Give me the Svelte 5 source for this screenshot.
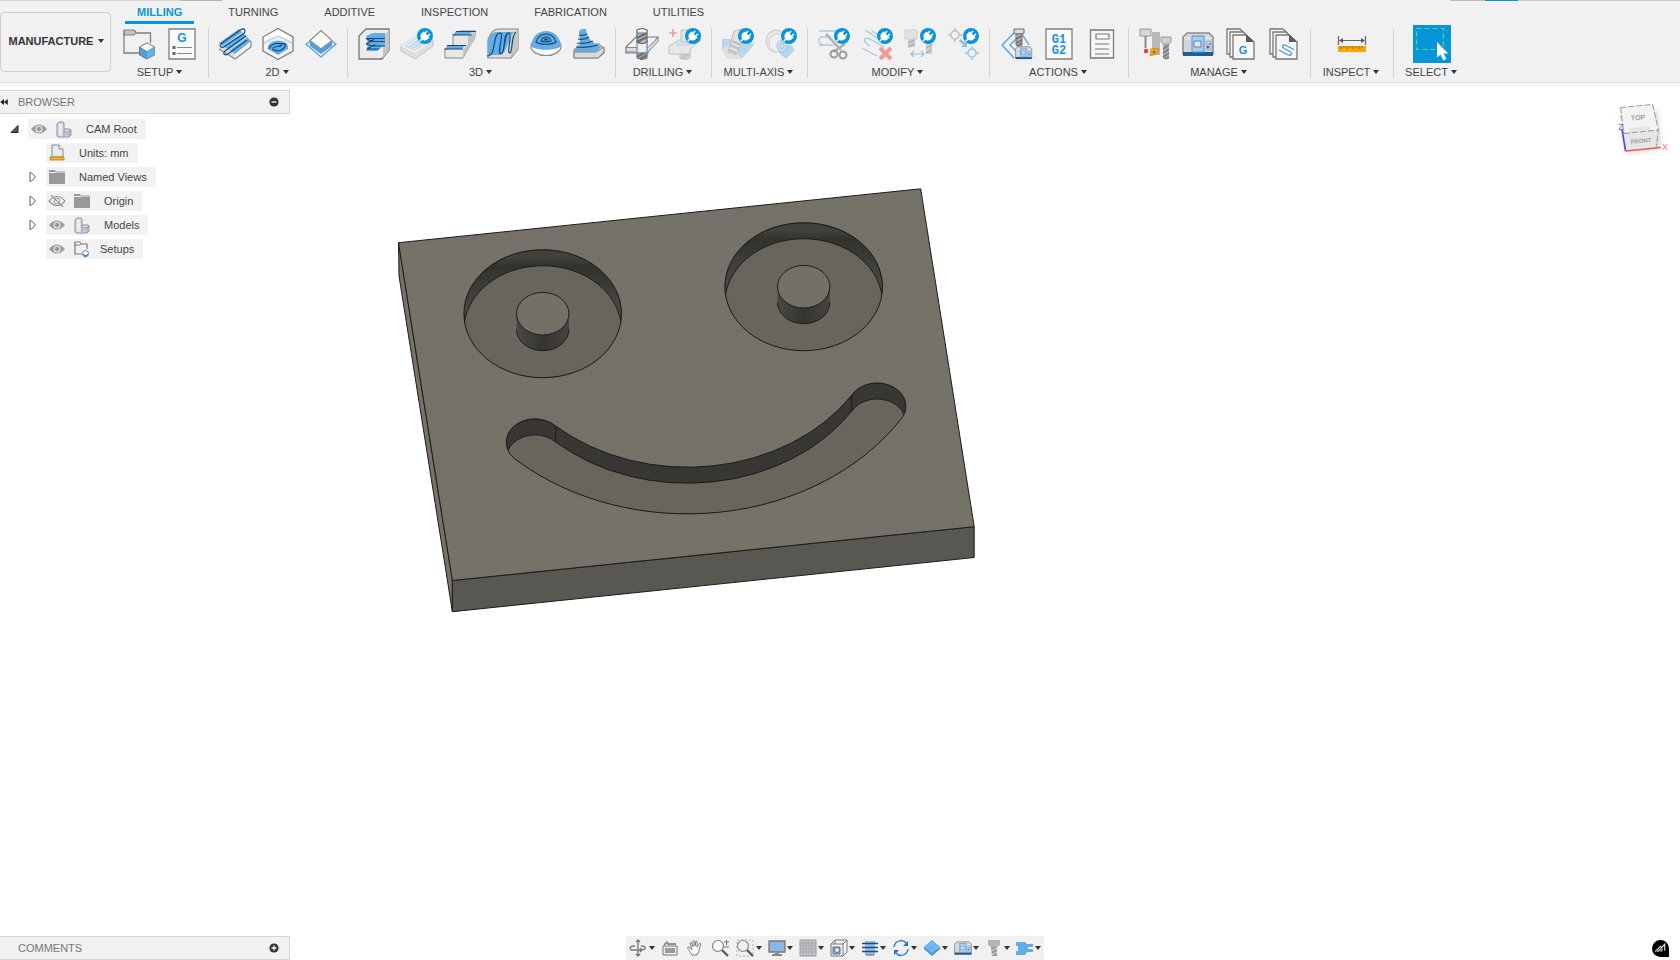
<script>
    let activeTab = "MILLING";
    let tabs = ["MILLING", "TURNING", "ADDITIVE", "INSPECTION", "FABRICATION", "UTILITIES"];

    // small "extension" badge that sits on the locked tools
    const plug = `<circle cx="24" cy="8" r="8" fill="#0696d7"/>
        <g transform="translate(24 8) rotate(45)" fill="#fff" stroke="#fff">
            <path d="M-3.500 -1.500h7v2a3.500 3.500 0 0 1-7 0z" stroke-width="1.500"/>
            <path d="M-2-5v3M2-5v3M0 4v3.500" stroke-width="1.600"/>
        </g>`;

    const machine = `<path d="M1 9l4-4h22l4 4v17H1z" fill="#d3d6da" stroke="#8a8a8a" stroke-width="1.5"/>
        <path d="M2 10h28" stroke="#eee"/><path d="M1 24h30v4H1z" fill="#1c5d92"/>
        <path d="M10 8h12v16H10z" fill="#a5cdf0" stroke="#5b93c9"/>
        <path d="M12 13h7v6h-7z" fill="#d9e6f2" stroke="#5b84ad"/>
        <path d="M24 13h5v9h-5z" fill="#a6cff2" stroke="#7aa8d4" stroke-width=".6"/>
        <circle cx="26" cy="19" r="1.2" fill="#d2204c"/><circle cx="28" cy="16" r=".8" fill="#1466b0"/>`;

    const pages = `<g fill="#f7f7f7" stroke="#777" stroke-width="1.300"><path d="M2 1h13l4 4v21H2z"/><path d="M5 4h13l4 4v21H5z"/><path d="M8 7h13l8 7v17H8z"/></g>
        <path d="M21 6l8 8h-8z" fill="#5a5a5a"/>`;

    const icons = {
        setup: `<path d="M1 3v22h17M13 5h14.500v10" fill="none" stroke="#7f7f7f" stroke-width="1.300"/>
            <path d="M1 2h10l2 2-2 3H1z" fill="#c4c4c4" stroke="#7f7f7f" stroke-width="1.200"/>
            <path d="M16.500 19l7.500-4 7.500 4v8L24 31l-7.500-4z" fill="#4b9fdc" stroke="#666" stroke-width=".8"/>
            <path d="M16.500 19l7.500-4 7.500 4-7.500 4.500z" fill="#fff" stroke="#777" stroke-width=".8"/>
            <path d="M24 23.500l7.500-4.500v8L24 31z" fill="#64b0e8"/>`,
        gdoc: `<path d="M3 1h26v30H3z" fill="#fafafa" stroke="#7f7f7f" stroke-width="1.300"/>
            <text x="16" y="14" text-anchor="middle" font-family="Liberation Sans, sans-serif" font-size="12" font-weight="bold" fill="#1c8fe3">G</text>
            <path d="M11 19.500h15M11 25.500h15" stroke="#888" stroke-width="1.200"/>
            <path d="M6.500 18h3v3h-3zM6.500 24h3v3h-3z" fill="#666"/>`,
        adaptive: `<path d="M0 16L20 2l12 11v6L16 31 0 21z" fill="#dcdcdc"/>
            <path d="M0 15L20 1l12 12-16 13z" fill="#63ace5"/>
            <path d="M5 18L23 5M10 22L28 9" stroke="#a9d2f3" stroke-width="2"/>
            <path d="M16 26v4.500l15.500-12v-5z" fill="#f2f2f2"/><path d="M0 21l16 10 16-12v-6" fill="none" stroke="#8a8a8a" stroke-width="1.200"/>
            <path d="M3 15L22 1.500c4-2 5 2 3 4L6 18c-3 3-7 0-3-3zM6 23c-3 3 0 5 3 3L28 12M6 23L27 8" fill="none" stroke="#0f4a78" stroke-width="1.100"/>`,
        pocket: `<path d="M1 9l15-8.500L31 9v14l-15 8.500L1 23z" fill="#fff"/>
            <path d="M1 14l15-7 15 7v9l-15 8.500L1 23z" fill="#d6d6d6"/>
            <path d="M1 17l15-8 15 8v6l-15 8.500L1 23z" fill="#f3f3f3"/>
            <path d="M6 18c3-7 17-7 20 0v3l-10 6-10-6z" fill="#63ace5"/>
            <path d="M1 9l15-8.500L31 9v14l-15 8.500L1 23z" fill="none" stroke="#808080" stroke-width="1.300"/>
            <path d="M7 21c3-7 9-6 17-5-2 6-7 9-14 5M11 20c3-3 6 0 9-3" fill="none" stroke="#0f4a78" stroke-width="1.100"/>`,
        contour2d: `<path d="M7 12l-6 4 15 13 15-13-6-4" fill="none" stroke="#4a9fe0" stroke-width="1.200"/>
            <path d="M5 13v5l11 8 11-8v-5l-11 8z" fill="#4d9fde"/>
            <path d="M5 12.500l11-10 11 10L16 21z" fill="#fcfcfc" stroke="#8a8a8a" stroke-width="1.100"/>`,
        rough: `<path d="M1 8l7-7h23v21l-7 9H1z" fill="#ececec" stroke="#777" stroke-width="1.300"/>
            <path d="M25 9l6-7v20l-6 8z" fill="#c4c4c4"/>
            <path d="M8 8c3-1 5-3 8-3h11v12c-4 1-5 5-8 6H8c2-5 2-9 0-15z" fill="#63ace5"/>
            <path d="M27 10.500H8l6 3h13M8 16l8-4.500M8 16l6 2h13M9 21l8-4.500M9 21h12" fill="none" stroke="#0f4a78" stroke-width="1.100"/>`,
        flat: `<g opacity=".45"><path d="M0 18L22 4l10 8v6L14 31 0 23z" fill="#c9c9c9" stroke="#888"/>
            <path d="M0 18L22 4l10 8-18 13z" fill="#eef4fa"/>
            <path d="M4 18L20 7l8 6-14 9z M8 18l12-8 4 3-10 7z M12 17l7-4 2 1-7 4z" fill="none" stroke="#63a5dc"/></g>${plug}`,
        steps: `<path d="M1 22l8-5V9l7-6h15v6L19 30H1z" fill="#e8e8e8" stroke="#8a8a8a"/>
            <path d="M19 22l12-15v4L19 30zM24 9l7-6v9l-7 7z" fill="#c2c2c2"/>
            <path d="M12 3h17l-4 4H9zM4 17h17l-3 4H1z" fill="#63ace5"/>
            <path d="M12 3.500h20M8 7h20M3 17.500h19M0 21h19" stroke="#0f4a78" stroke-width="1.200"/>`,
        parallel: `<path d="M1 12C3 6 6 1 11 1h20v20l-7 9H1z" fill="#dedede" stroke="#888" stroke-width="1.200"/>
            <path d="M24 9l7-7v19l-7 8z" fill="#c7c7c7"/>
            <path d="M1 27V12C4 6 6 4 10 4h18c-6 3-5 9-8 14-2 6-4 8-8 9z" fill="#63ace5"/>
            <path d="M0 28c10 0 5-23 13-23 5 0-4 20 1 21 5 0 1-21 8-21M14 26c4 0 3-22 8-21 4 1-3 20 1 20 3-2 1-18 6-21" fill="none" stroke="#0f4a78" stroke-width="1.200"/>`,
        scallop: `<ellipse cx="16" cy="18.500" rx="15" ry="9" fill="#fff" stroke="#888" stroke-width="1.200"/>
            <path d="M1 18C2 8 9 3 16 3s14 5 15 15c-4 5-26 5-30 0z" fill="#63ace5"/>
            <path d="M6 14c2-6 6-8 10-8s8 2 10 8c-4 3-16 3-20 0zM11 13c1-3 3-4 5-4s4 1 5 4c-3 1-7 1-10 0zM14.500 12l1.500-1.500 1.500 1.500z" fill="none" stroke="#0f4a78" stroke-width="1.100"/>`,
        spiral: `<path d="M1 22l7-6h18l5 5v4l-6 5H1z" fill="#dedede" stroke="#888" stroke-width="1.200"/>
            <path d="M6 3l3-2h4c1 9 6 14 15 18l-5 5H1l6-8z" fill="#63ace5"/>
            <path d="M6 7c4 1 6 0 8-1M5 11c5 1 8 0 11-2M4 15c7 1 12 0 16-2M3 19c9 1 16 0 22-2" fill="none" stroke="#0f4a78" stroke-width="1.200"/>
            <path d="M1 24h22l8-5v5l-6 6H1z" fill="#d8d8d8" stroke="#888"/>`,
        drill: `<path d="M11 17h10v13q-5 3-10 0z" fill="#a5a5a5" stroke="#666"/>
            <path d="M11 29l9-5M14 31l7-4" stroke="#6b6b6b" stroke-width="2"/>
            <path d="M0 19L10 9h22L22 22v3H0z" fill="#f1f1f1" stroke="#7a7a7a" stroke-width="1.200"/>
            <path d="M0 19.500h22l10-10v4L22 24H0z" fill="#dcdcdc" stroke="#858585"/>
            <path d="M11 12h10v12H11z" fill="#eee"/><path d="M11 12v12M21 12v12" stroke="#3f9ae0" stroke-width="1.200"/>
            <path d="M11 2q5-3 10 0v12q-5 3-10 0z" fill="#b9b9b9" stroke="#666" stroke-width="1.200"/>
            <path d="M11 10l10-5M11 14l10-5" stroke="#6b6b6b" stroke-width="2"/>
            <path d="M11 2q5-3 10 0v3H11z" fill="#eee" stroke="#777"/>`,
        drill2: `<g opacity=".4"><path d="M11 17h10v13q-5 3-10 0z" fill="#a5a5a5" stroke="#777"/>
            <path d="M11 26l9-4M12 31l8-5" stroke="#777" stroke-width="2"/>
            <path d="M0 18L10 12h22L21 21v5H0z" fill="#dcdcdc" stroke="#777"/>
            <path d="M7 15h18l-5 3H7z" fill="#8cc4f2"/><path d="M12 2h9v12h-9z" fill="#ccc" stroke="#777"/></g>
            <path d="M0 5h8M4 1v8" stroke="#f09aa0" stroke-width="1.600"/>${plug}`,
        swarf: `<g opacity=".4"><path d="M0 11h11l4 6-9 13-6-9z" fill="#63ace5"/><path d="M0 21l12-9 20 3-12 15H6z" fill="#ccc" stroke="#aaa"/>
            <path d="M14 24l8-10 10 3-12 13z" fill="#63ace5"/>
            <path d="M12 3l8-2 3 6-9 20-8-3z" fill="#ccc" stroke="#777"/><path d="M8 17l9 4M10 13l9 4M7 22l7 3" stroke="#777" stroke-width="2"/></g>${plug}`,
        flow: `<g opacity=".4"><ellipse cx="11" cy="13" rx="10" ry="11" fill="#ddd" stroke="#888"/>
            <ellipse cx="13" cy="15" rx="9" ry="9" fill="#eee" stroke="#999"/><path d="M13 24l12-8 5 6-9 9z" fill="#63ace5"/>
            <ellipse cx="17" cy="18" rx="5" ry="6" fill="#9bc8ee" stroke="#357fc0"/><ellipse cx="17" cy="18" rx="2" ry="3" fill="none" stroke="#357fc0"/></g>${plug}`,
        trim: `<path d="M1 3h19M1 17h10M5 9h8M5 9c-6 0-6 8 3 8h12" fill="none" stroke="#a9cbe8" stroke-width="1.300"/>
            <path d="M8 6l15 16M27 16L15 24" stroke="#b0b0b0" stroke-width="2.500"/>
            <circle cx="16" cy="26" r="3.500" fill="none" stroke="#9a9a9a" stroke-width="2"/><circle cx="25" cy="27" r="3.500" fill="none" stroke="#9a9a9a" stroke-width="2"/>${plug}`,
        remove: `<path d="M1 20l15 8M4 2l12 8M9 18L5 15c-4-4 1-6 4-4l14 8M11 3l8 5" fill="none" stroke="#a5c9e8" stroke-width="1.400"/>
            <path d="M19 20l11 11M30 20L19 31" stroke="#ee9b9b" stroke-width="4"/>${plug}`,
        replace: `<g opacity=".4"><path d="M1 2h12v9H1z" fill="#ccc" stroke="#999"/><path d="M4 11h7v8H4z" fill="#999"/>
            <path d="M22 14h6v12h-6z" fill="#999"/><path d="M4 15l7-3M4 19l7-3M22 20l6-3M22 25l6-3" stroke="#555" stroke-width="1.500"/></g>
            <path d="M7 26h13M10 23l-3 3 3 3M17 23l3 3-3 3" fill="none" stroke="#8fc1ea" stroke-width="1.200"/>${plug}`,
        move: `<g fill="none" stroke="#c6c6c6" stroke-width="1.800"><circle cx="8" cy="7" r="4"/><path d="M8 0v3M8 11v3M1 7h3M12 7h3"/></g>
            <g fill="none" stroke="#a5cdeb" stroke-width="1.800"><circle cx="25" cy="25" r="4"/><path d="M25 18v3M25 29v3M18 25h3M29 25h3"/></g>
            <path d="M13 12l4 4" stroke="#8fc1ea" stroke-width="3"/><path d="M20 13v6h-6z" fill="#8fc1ea"/>${plug}`,
        simulate: `<path d="M14 5L2 17l12 13M18 9l-8 8 8 8M22 6l7 11" fill="none" stroke="#3f9ae6" stroke-width="1.200"/>
            <path d="M14 1h10v4l-2 1h-6l-2-1z" fill="#ddd" stroke="#666"/><path d="M16 6h6v11l-3 2-3-2z" fill="#aaa" stroke="#777"/>
            <path d="M16 11l6-3M16 15l6-3M17 18l5-3" stroke="#666" stroke-width="1.300"/>
            <g transform="translate(15 16) scale(.54)">${machine}</g>`,
        post: `<path d="M3 1h26v30H3z" fill="#fafafa" stroke="#7f7f7f" stroke-width="1.300"/>
            <g font-family="Liberation Mono, monospace" font-size="12" font-weight="bold" fill="#1c8fe3" text-anchor="middle"><text x="16" y="15">G1</text><text x="16" y="26">G2</text></g>`,
        sheet: `<path d="M4.500 2h23v28h-23z" fill="#f7f7f7" stroke="#7a7a7a" stroke-width="1.300"/>
            <path d="M10 6h13v5H10z" fill="none" stroke="#777" stroke-width="1.200"/><path d="M9 16h14M9 21h14M9 26h14" stroke="#777" stroke-width="1.100"/>`,
        tools: `<path d="M13 4h8v23h-8z" fill="#b9b9b9"/><path d="M1 1h11v7H1z" fill="#d8d8d8" stroke="#999"/><path d="M6.500 8v12" stroke="#888" stroke-width="2"/>
            <circle cx="7" cy="23" r="2.200" fill="#f13b3b"/><path d="M12 21l8-1-2 6-7 2z" fill="#f5a31b" stroke="#c57c08" stroke-width=".6"/><circle cx="15" cy="24" r="1" fill="#444"/>
            <path d="M22 9h10v5l-2 2h-6l-2-2z" fill="#cfcfcf" stroke="#999"/><path d="M24 16h6v15h-6z" fill="#aaa"/>
            <path d="M24 21l6-4M24 25l6-4M24 29l6-4M26 31l4-2" stroke="#777" stroke-width="1.500"/>`,
        machine,
        templates: `${pages}<text x="18" y="26" text-anchor="middle" font-family="Liberation Sans, sans-serif" font-size="11" font-weight="bold" fill="#1c8fe3">G</text>`,
        toolpaths: `${pages}<path d="M11 22l8 4.500c4 2 6-1 3-3l-6-3c-3-2-1-5 2-3l8 4" fill="none" stroke="#3f9ae6" stroke-width="1.300"/>`,
        measure: `<path d="M2 18h28v6H2z" fill="#f9a602"/><path d="M5 18v3M8 18v2M11 18v3M14 18v2M17 18v3M20 18v2M23 18v3M26 18v2" stroke="#9a6800"/>
            <path d="M2.500 8v9M29.500 8v9M4 12.500h24" stroke="#666" stroke-width="1.200"/><path d="M3 12.500l4-2.500v5zM29 12.500l-4-2.500v5z" fill="#555"/>`,
        select: `<path d="M0.500 0.500h27v21h-27z" fill="none" stroke="#5fd08a" stroke-width="1.200" stroke-dasharray="5 3"/>
            <path d="M21 14v15.500l3.500-3 2.800 6 3-1.500-2.600-5.500h4.500z" fill="#fff"/>`,
        eye: `<path d="M1 9q8-9 16 0-8 9-16 0z" fill="#999"/><circle cx="9" cy="9" r="3.500" fill="#f1f1f1"/><circle cx="9" cy="9" r="2.400" fill="#999"/>`,
        eyeOff: `<path d="M1 9q8-9 16 0-8 9-16 0z" fill="none" stroke="#999" stroke-width="1.200"/><circle cx="9" cy="9" r="3" fill="none" stroke="#999"/><path d="M3 3l12 12" stroke="#999" stroke-width="1.300"/>`,
        part: `<path d="M2 4l2-2h4l1 1v6h6l1 1v5l-2 2H3l-1-1z" fill="#d6dae4" stroke="#8b909b"/><path d="M4 4h3v11H4z" fill="#e9ecf2"/><path d="M9 9v7M9 12h5l2-2M14 12v4" fill="none" stroke="#8b909b"/><path d="M9.500 12.500h4v3h-4z" fill="#bcc3d3"/>`,
        ruler: `<path d="M4 1h7l4 4v8H4z" fill="#e6eaf3" stroke="#888"/><path d="M11 1v4h4" fill="#fff" stroke="#888"/><path d="M2 13h14v3H2z" fill="#f0b128" stroke="#b77d10" stroke-width=".8"/>`,
        folder: `<path d="M1 2h6l1 2H1zM1 5h16v11H1z" fill="#999"/><path d="M8 4h9" stroke="#999"/>`,
        setups: `<path d="M2 3v11h7M7 4h7v5" fill="none" stroke="#777" stroke-width="1.200"/><path d="M2 2h5l1 1.500L7 5H2z" fill="#fff" stroke="#777"/>
            <circle cx="12.500" cy="13.500" r="3" fill="#fff" stroke="#777"/><path d="M9.500 13.500l3 1.500 3-1.500-1 3-2 1-2-1z" fill="#3b97dc"/>`,
        orbit: `<path d="M9 1v16M7 3l2-2 2 2M7 15l2 2 2-2" fill="none" stroke="#777" stroke-width="1.400"/><path d="M6 7C1 7 0 9 2 11h11M12 7c5 0 6 3 1 4M11 9l2 2-2 2" fill="none" stroke="#777" stroke-width="1.300"/>`,
        look: `<path d="M2 7h14v9H2z" fill="#eee" stroke="#777"/><path d="M4 9h10v5H4z" fill="#9a9a9a"/><path d="M3 6l3-3 1 2h8" fill="none" stroke="#777" stroke-width="1.300"/>`,
        pan: `<path d="M6 16C4 12 1 10 2 8c2 0 3 2 4 3L4 4c1-1 2 0 3 4l0-6c1-1 2 0 2 5l1-5c2 0 1 2 1 6l3-4c2 1-1 4-1 8l-2 4z" fill="#fff" stroke="#777"/>`,
        zoom: `<circle cx="7" cy="7" r="5.500" fill="#f5fafc" stroke="#888" stroke-width="1.200"/><path d="M11 11l6 6" stroke="#555" stroke-width="2.200"/><path d="M13 3h5M15.500 1v5M13 8h5" stroke="#777"/>`,
        zoomWin: `<path d="M1 1h16v16H1z" fill="none" stroke="#aaa" stroke-dasharray="2 2"/><circle cx="7" cy="7" r="5.500" fill="#e5f2f0" stroke="#888" stroke-width="1.200"/><path d="M11 11l6 6" stroke="#555" stroke-width="2.200"/>`,
        display: `<path d="M1 2h16v11H1z" fill="#8ab7e6" stroke="#777" stroke-width="1.300"/><path d="M7 14h4v1h3v2H4v-2h3z" fill="#888"/>`,
        grid: `<path d="M1 1h16v16H1z" fill="#c4c8cd" stroke="#999"/><path d="M1 4h16M1 7h16M1 10h16M1 13h16M4 1v16M7 1v16M10 1v16M13 1v16" stroke="#989ca2" stroke-width=".7"/>`,
        views: `<path d="M1 5l4-4h12v12l-4 4H1z" fill="#f3f3f3" stroke="#777"/><path d="M1 5h12v12M13 5l4-4M5 1v4" fill="none" stroke="#777"/><path d="M3 8h7v7H3z" fill="#8fc3ef" stroke="#568"/><circle cx="7" cy="11" r="2.500" fill="#e8f3fb" stroke="#667"/>`,
        stack: `<path d="M4 2h10v14H4z" fill="#8fc0ea"/><path d="M1 4.500h16M1 8.500h16M1 12.500h16" stroke="#1d4a78" stroke-width="1.400"/><path d="M5 16h8" stroke="#667"/>`,
        cycle: `<path d="M2 8C3 1 11 0 14 4M16 10c-1 7-9 8-12 4" fill="none" stroke="#2f7fd0" stroke-width="1.500"/><path d="M16 2v5h-5zM2 16v-5h5z" fill="#2f6fb5"/>`,
        stock: `<path d="M1 8l8-7 8 7v2l-8 7-8-7z" fill="#4596d4"/><path d="M1 8l8-7 8 7-8 6z" fill="#76b9ed"/><path d="M5 5l8 6M3 7l8 6M13 5l-8 6" stroke="#5a9fd4" stroke-width=".6"/>`,
        bit: `<path d="M3 1h12v5l-3 2H6L3 6z" fill="#b3b3b3"/><path d="M6 8h6v9H7z" fill="#999"/><path d="M6 12l6-3M6 16l6-3" stroke="#ddd"/>`,
        fixture: `<path d="M0 3h9l2 2h6v3h-5v2h5v3h-6l-2 3H0v-4h2V7H0z" fill="#63ace5"/>`,
    };

    let groups = [
        { label: "SETUP", tools: ["setup", "gdoc"] },
        { label: "2D", tools: ["adaptive", "pocket", "contour2d"] },
        { label: "3D", tools: ["rough", "flat", "steps", "parallel", "scallop", "spiral"] },
        { label: "DRILLING", tools: ["drill", "drill2"] },
        { label: "MULTI-AXIS", tools: ["swarf", "flow"] },
        { label: "MODIFY", tools: ["trim", "remove", "replace", "move"] },
        { label: "ACTIONS", tools: ["simulate", "post", "sheet"] },
        { label: "MANAGE", tools: ["tools", "machine", "templates", "toolpaths"] },
        { label: "INSPECT", tools: ["measure"] },
        { label: "SELECT", tools: ["select"] },
    ];

    let tree = [
        { label: "CAM Root", icons: ["eye", "part"], root: true, toggle: "open" },
        { label: "Units: mm", icons: ["ruler"] },
        { label: "Named Views", icons: ["folder"], toggle: "closed" },
        { label: "Origin", icons: ["eyeOff", "folder"], toggle: "closed" },
        { label: "Models", icons: ["eye", "part"], toggle: "closed" },
        { label: "Setups", icons: ["eye", "setups"], near: true },
    ];

    let nav = [
        { name: "orbit", menu: true, wide: true },
        { name: "look" },
        { name: "pan" },
        { name: "zoom" },
        { name: "zoomWin", menu: true, wide: true },
        { name: "display", menu: true },
        { name: "grid", menu: true },
        { name: "views", menu: true },
        { name: "stack", menu: true },
        { name: "cycle", menu: true },
        { name: "stock", menu: true },
        { name: "machine", menu: true, box: "0 0 32 32" },
        { name: "bit", menu: true },
        { name: "fixture", menu: true },
    ];

    let eyes = [
        { x: 542.7, y: 313.7 },
        { x: 803.7, y: 286.7 },
    ];

    const smile =
        "M555.7 426A196.500 159.600 0 0 0 851.8 395.1A28.800 23.400 0 1 1 899.8 420.7A254 206.300 0 0 1 517.1 460.6A28.800 23.400 0 1 1 555.7 426Z";
</script>

<div class="app">
    <div class="strip"><i class="doc"></i><i class="dark"></i><i class="rest"></i><i class="doc right"></i><i class="blue"></i><i class="end"></i></div>
    <header>
        <button class="workspace">MANUFACTURE <span class="caret"></span></button>
        <div class="ribbon">
            <nav class="tabs">
                {#each tabs as tab}
                    <button class:active={tab === activeTab} on:click={() => (activeTab = tab)}>{tab}</button>
                {/each}
            </nav>
            <div class="groups">
                {#each groups as group}
                    <section class="group">
                        <div class="tools">
                            {#each group.tools as tool}
                                <button class="tool" class:selected={tool === "select"} aria-label={tool}>
                                    <svg viewBox="0 0 32 32">{@html icons[tool]}</svg>
                                </button>
                            {/each}
                        </div>
                        <button class="group-label">{group.label}<span class="caret"></span></button>
                    </section>
                {/each}
            </div>
        </div>
    </header>

    <main>
        <svg class="scene" viewBox="0 86 1680 874">
            <defs>
                <linearGradient id="face" gradientUnits="userSpaceOnUse" x1="490" y1="503" x2="486" y2="532" spreadMethod="reflect">
                    <stop offset="0.1" stop-color="#757367" />
                    <stop offset="0.9" stop-color="#75706a" />
                </linearGradient>
                <linearGradient id="wall" x1="0" y1="0" x2="0" y2="1">
                    <stop offset="0" stop-color="#42413c" />
                    <stop offset="0.06" stop-color="#42413c" />
                    <stop offset="0.13" stop-color="#31312e" />
                    <stop offset="0.5" stop-color="#4b4a45" />
                    <stop offset="1" stop-color="#3a3935" />
                </linearGradient>
                <linearGradient id="post" x1="0" y1="0" x2="1" y2="0">
                    <stop offset="0" stop-color="#4a4944" />
                    <stop offset="0.5" stop-color="#353430" />
                    <stop offset="1" stop-color="#45443f" />
                </linearGradient>
                <radialGradient id="floor">
                    <stop offset="0" stop-color="#6c6760" />
                    <stop offset="1" stop-color="#67645c" />
                </radialGradient>
                <clipPath id="eye-clip"><ellipse rx="78.800" ry="64" /></clipPath>
                <clipPath id="smile-clip"><path d={smile} /></clipPath>
            </defs>
            <g stroke="#1c1c1a" stroke-width="1" stroke-linejoin="round">
                <path d="M398.5 242.700L452.400 580.500V611.700L399 276z" fill="#777169" />
                <path d="M452.400 580.500L974.200 526.700V557.500L452.400 611.700z" fill="#585751" />
                <path d="M398.500 242.700L920.700 188.800L974.200 526.700L452.400 580.500z" fill="url(#face)" />
                {#each eyes as eye}
                    <g transform="translate({eye.x} {eye.y})">
                        <g clip-path="url(#eye-clip)">
                            <ellipse rx="78.800" ry="64" fill="url(#wall)" />
                            <ellipse cy="16" rx="78.800" ry="64" fill="url(#floor)" />
                        </g>
                        <ellipse rx="78.800" ry="64" fill="none" />
                        <path d="M-26.200 0V15.700A26.200 21.300 0 0 0 26.200 15.700V0z" fill="url(#post)" stroke="none" />
                        <path d="M-26.200 15.700A26.200 21.300 0 0 0 26.200 15.700" fill="none" />
                        <ellipse rx="26.200" ry="21.300" fill="#737166" />
                    </g>
                {/each}
                <g clip-path="url(#smile-clip)">
                    <path d={smile} fill="#383733" />
                    <path d={smile} fill="#69655d" transform="translate(0 16)" />
                </g>
                <path d={smile} fill="none" />
                <path d="M555.700 426v16M851.800 395v16" />
            </g>
        </svg>

        <div class="upper">
            <aside>
                <div class="bar">
                    <svg class="collapse" viewBox="0 0 10 8"><path d="M5 0v8L0 4zM10 0v8L5 4z" fill="#222" /></svg>
                    <h2>BROWSER</h2>
                    <button class="round" aria-label="Hide browser">
                        <svg viewBox="0 0 10 10"><circle cx="5" cy="5" r="4.600" fill="#333" /><path d="M2.500 5h5" stroke="#fff" stroke-width="1.300" /></svg>
                    </button>
                </div>
                <ul class="tree">
                    {#each tree as node}
                        <li class:root={node.root}>
                            <button class="toggle" aria-label="Toggle {node.label}">
                                {#if node.toggle === "open"}
                                    <svg viewBox="0 0 10 10"><path d="M8 1.500v7H1z" fill="#555" stroke="#222" /></svg>
                                {:else if node.toggle === "closed"}
                                    <svg viewBox="0 0 10 10"><path d="M2 0.500h1l4.500 4.500-4.500 4.500H2z" fill="#fff" stroke="#555" /></svg>
                                {/if}
                            </button>
                            <div class="chip" class:near={node.near}>
                                {#each node.icons as name}
                                    <svg viewBox="0 0 18 18">{@html icons[name]}</svg>
                                {/each}
                                <span>{node.label}</span>
                            </div>
                        </li>
                    {/each}
                </ul>
            </aside>

            <svg class="cube" viewBox="0 0 62 62">
                <defs>
                    <filter id="soft" x="-30%" y="-30%" width="160%" height="160%"><feGaussianBlur stdDeviation="3" /></filter>
                </defs>
                <path d="M12 14l34-2 4 38-33 5z" fill="#999" opacity=".5" filter="url(#soft)" />
                <path d="M10.500 9.500L42.500 6.500 48.500 32 14 35.500z" fill="#f3f3f3" />
                <path d="M14 35.500L48.500 32 46 49.500 15.500 53z" fill="#e6e6e7" />
                <path d="M19 30l21-2v5l-20 2z" fill="#e3e4e6" />
                <path d="M10.500 9.500L42.500 6.500 48.500 32 46 49.500M14 35.500L48.500 32M10.500 9.500L14 35.500" fill="none" stroke="#999" stroke-dasharray="6 2" />
                <path d="M12 31l3.500 22" stroke="#4a4ae8" stroke-width="1.600" />
                <path d="M15.500 53L51 49.500" stroke="#ee5a5a" stroke-width="1.600" />
                <path d="M11 17v3" stroke="#6ed06e" />
                <g font-family="Liberation Sans, sans-serif" text-anchor="middle">
                    <text x="28" y="22" font-size="7" font-weight="bold" fill="#9a9da2" transform="rotate(-4 28 20)">TOP</text>
                    <text x="31" y="45" font-size="6" font-weight="bold" fill="#9a9da2" transform="rotate(-6 31 43)">FRONT</text>
                    <text x="11" y="32" font-size="9" fill="#6a6af0">Z</text>
                    <text x="55" y="52" font-size="9" fill="#f27b7b">X</text>
                </g>
            </svg>
        </div>

        <footer>
            <div class="bar comments">
                <h2>COMMENTS</h2>
                <button class="round" aria-label="Add comment">
                    <svg viewBox="0 0 10 10"><circle cx="5" cy="5" r="4.600" fill="#333" /><path d="M2.500 5h5M5 2.500v5" stroke="#fff" stroke-width="1.300" /></svg>
                </button>
            </div>
            <div class="nav">
                {#each nav as item}
                    <button class:wide={item.wide} class:plain={!item.menu} aria-label={item.name}>
                        <svg viewBox={item.box || "0 0 18 18"}>{@html icons[item.name]}</svg>
                        {#if item.menu}<span class="caret"></span>{/if}
                    </button>
                {/each}
            </div>
            <button class="badge" aria-label="Assistant">
                <svg viewBox="0 0 16 16"><path d="M3 11l5-5 1 1 3-3v6M5 11l5-4M8 11l2-2" fill="none" stroke="#ddd" stroke-width="1.100" /></svg>
            </button>
        </footer>
    </main>
</div>

<style>
    :global(body) {
        margin: 0;
        background: #fff;
    }

    .app {
        min-height: 100vh;
        display: flex;
        flex-direction: column;
        font-family: "Liberation Sans", Arial, sans-serif;
        font-size: 11px;
        line-height: 14px;
        color: #444;
    }

    button {
        font: inherit;
        color: inherit;
        background: none;
        border: none;
        padding: 0;
        cursor: pointer;
    }

    svg {
        display: block;
        flex: none;
    }

    .caret {
        display: inline-block;
        border: 3px solid transparent;
        border-top: 4px solid #333;
        border-bottom: 0;
    }

    .strip {
        display: flex;
        height: 1px;
        background: #f1f1f1;
    }

    .doc {
        width: 180px;
        background: #d5d5d5;
    }

    .dark {
        width: 42px;
        background: #b5b5b5;
    }

    .rest {
        flex: 1;
    }

    .doc.right {
        width: 35px;
        background: #bbb;
    }

    .blue {
        width: 33px;
        background: #0696d7;
    }

    .end {
        width: 162px;
        background: #c8c8c8;
    }

    header {
        display: flex;
        height: 81px;
        background: #f1f1f1;
        border-bottom: 1px solid #dcdcdc;
        box-shadow: 0 3px 0 #f5f5f5;
        margin-bottom: 3px;
    }

    .workspace {
        box-sizing: border-box;
        width: 111px;
        height: 60px;
        margin: 11px 2px 0 0;
        padding: 0 0 2px 2px;
        border: 1px solid #cfcfcf;
        border-radius: 4px;
        font-weight: bold;
        color: #333;
        display: flex;
        align-items: center;
        justify-content: center;
        gap: 5px;
    }

    .tabs {
        display: flex;
        gap: 22px;
        padding-left: 12px;
    }

    .tabs button {
        padding: 4px 12px 2px;
        border-bottom: 3px solid transparent;
    }

    .tabs .active {
        font-weight: bold;
        color: #0696d7;
        border-color: #0696d7;
    }

    .groups {
        display: flex;
        padding-top: 4px;
    }

    .group {
        display: flex;
        flex-direction: column;
        align-items: center;
        gap: 5px;
        height: 50px;
        min-width: 72px;
        padding: 0 5px;
        border-right: 1px solid #d4d4d4;
    }

    .group:last-child {
        border: none;
        min-width: 66px;
    }

    .tools {
        display: flex;
        gap: 1px;
    }

    .tool {
        width: 42px;
        display: flex;
        justify-content: center;
    }

    .tool svg {
        width: 32px;
        height: 32px;
        overflow: visible;
    }

    .tool.selected {
        width: 38px;
        height: 38px;
        margin: -3px 0;
        background: #0696d7;
        align-items: center;
    }

    .group-label {
        display: flex;
        align-items: center;
        gap: 3px;
        padding-right: 2px;
    }

    main {
        position: relative;
        flex: 1;
        display: flex;
        flex-direction: column;
        justify-content: space-between;
    }

    .scene {
        position: absolute;
        inset: 0;
        width: 100%;
        height: 100%;
    }

    .upper,
    footer {
        position: relative;
    }

    .upper {
        display: flex;
        justify-content: space-between;
        padding-top: 4px;
    }

    .bar {
        box-sizing: border-box;
        width: 290px;
        height: 24px;
        display: flex;
        align-items: center;
        background: #f1f1f1;
        border: 1px solid #d6d6d6;
        border-left: none;
        padding-right: 10px;
    }

    .bar h2 {
        margin: 0;
        flex: 1;
        font-size: 11px;
        font-weight: normal;
        color: #757575;
    }

    .collapse {
        width: 8px;
        height: 6px;
        margin-right: 10px;
    }

    .comments {
        padding-left: 18px;
    }

    .round svg {
        width: 10px;
        height: 10px;
    }

    .tree {
        list-style: none;
        margin: 5px 0 0;
        padding: 0;
        display: flex;
        flex-direction: column;
        gap: 4px;
    }

    li {
        display: flex;
        align-items: center;
        padding-left: 28px;
    }

    li.root {
        padding-left: 10px;
    }

    .toggle {
        width: 18px;
    }

    .toggle svg {
        width: 10px;
        height: 10px;
    }

    .chip {
        display: flex;
        align-items: center;
        gap: 7px;
        height: 20px;
        padding: 0 9px 0 2px;
        background: #f2f2f2;
    }

    .chip svg {
        width: 18px;
        height: 18px;
    }

    .chip span {
        padding-left: 6px;
    }

    .chip.near span {
        padding-left: 2px;
    }

    .cube {
        width: 62px;
        height: 62px;
        margin: 8px 8px 0 0;
    }

    footer {
        display: grid;
        grid-template-columns: 1fr auto 1fr;
        align-items: center;
        padding-right: 11px;
    }

    .nav {
        display: flex;
        height: 24px;
        background: #f1f1f1;
    }

    .nav button {
        display: flex;
        align-items: center;
        gap: 1px;
        padding: 0 3px;
    }

    .nav .wide {
        gap: 2px;
    }

    .nav .plain {
        padding-right: 4px;
    }

    .nav svg {
        width: 18px;
        height: 18px;
    }

    .badge {
        justify-self: end;
        width: 17px;
        height: 17px;
        background: #000;
        border-radius: 9px 9px 0 9px;
    }
</style>
